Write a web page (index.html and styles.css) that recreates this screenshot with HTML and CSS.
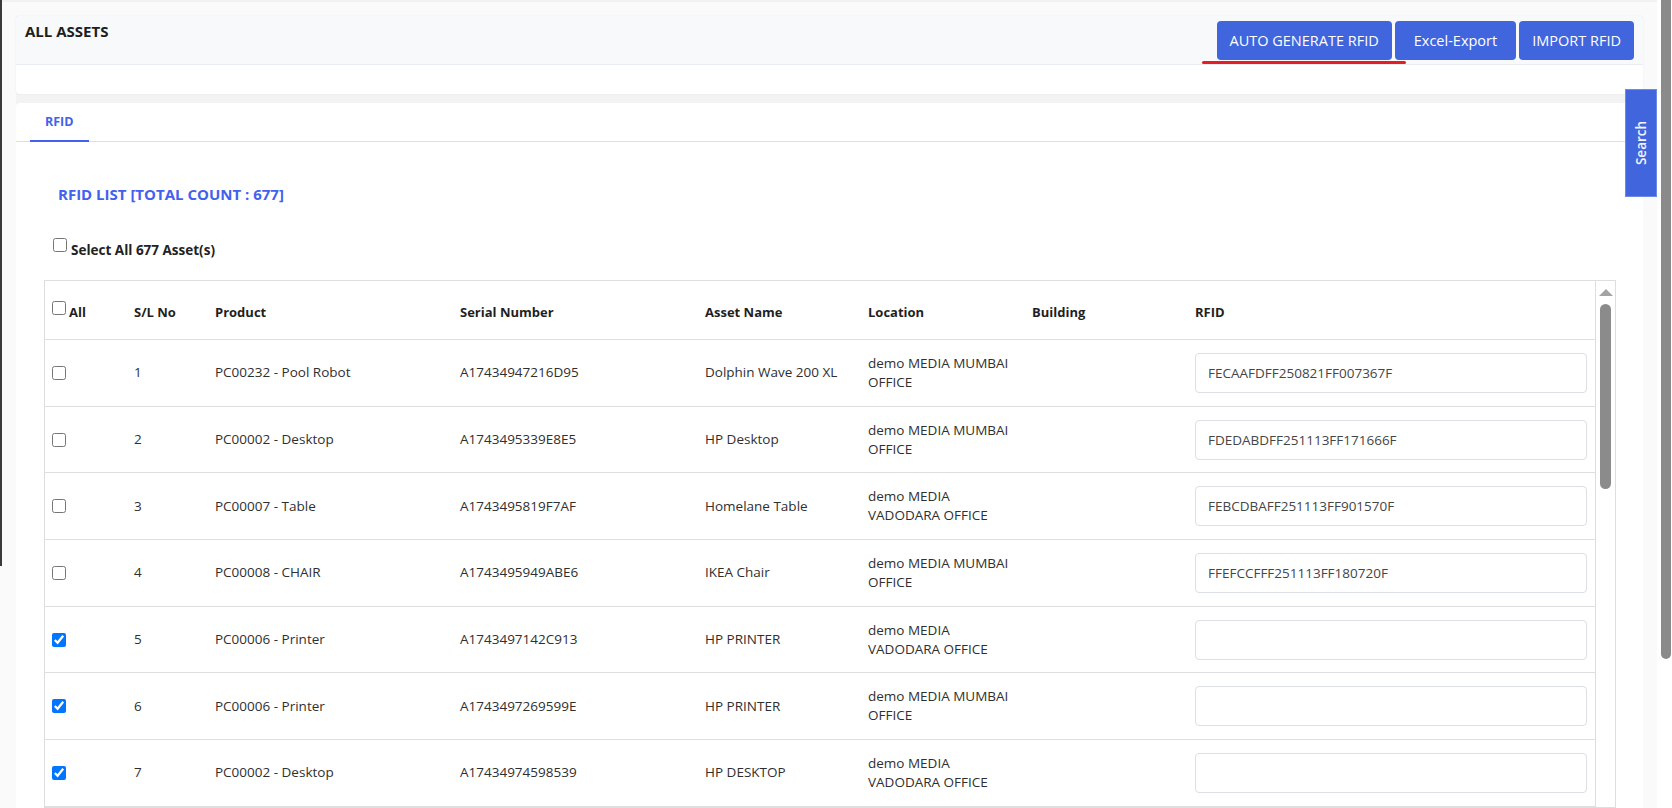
FILE: index.html
```html
<!DOCTYPE html>
<html lang="en">
<head>
  <meta charset="UTF-8">
  <meta name="viewport" content="width=device-width, initial-scale=1.0">
  <title>All Assets - RFID</title>
  <link rel="stylesheet" href="styles.css">
</head>
<body>
  <div class="page">
    <div class="content">
      <div class="main">

        <div class="page-head">
          <div class="head-bar">
            <h1>ALL ASSETS</h1>
            <div class="actions">
              <button class="btn">AUTO GENERATE RFID</button>
              <button class="btn btn-export">Excel-Export</button>
              <button class="btn">IMPORT RFID</button>
            </div>
          </div>
          <div class="head-foot"></div>
        </div>

        <div class="panel">
          <div class="tabs">
            <a class="tab active">RFID</a>
          </div>

          <div class="panel-body">
            <h2 class="list-title">RFID LIST [TOTAL COUNT : 677]</h2>
            <label class="select-all"><input type="checkbox">Select All 677 Asset(s)</label>

            <div class="table-box">
              <div class="table-scroll">
                <table class="rfid-table">
                  <colgroup>
                    <col class="c-check">
                    <col class="c-sl">
                    <col class="c-product">
                    <col class="c-serial">
                    <col class="c-asset">
                    <col class="c-location">
                    <col class="c-building">
                    <col class="c-rfid">
                  </colgroup>
                  <thead>
                    <tr>
                      <th class="check-cell"><label class="all-check"><input type="checkbox">All</label></th>
                      <th>S/L No</th>
                      <th>Product</th>
                      <th>Serial Number</th>
                      <th>Asset Name</th>
                      <th>Location</th>
                      <th>Building</th>
                      <th>RFID</th>
                    </tr>
                  </thead>
                  <tbody>
                    <tr>
                      <td class="check-cell"><input type="checkbox"></td>
                      <td>1</td>
                      <td>PC00232 - Pool Robot</td>
                      <td>A17434947216D95</td>
                      <td>Dolphin Wave 200 XL</td>
                      <td>demo MEDIA MUMBAI<br>OFFICE</td>
                      <td></td>
                      <td><input class="rfid-input" type="text" value="FECAAFDFF250821FF007367F"></td>
                    </tr>
                    <tr>
                      <td class="check-cell"><input type="checkbox"></td>
                      <td>2</td>
                      <td>PC00002 - Desktop</td>
                      <td>A1743495339E8E5</td>
                      <td>HP Desktop</td>
                      <td>demo MEDIA MUMBAI<br>OFFICE</td>
                      <td></td>
                      <td><input class="rfid-input" type="text" value="FDEDABDFF251113FF171666F"></td>
                    </tr>
                    <tr>
                      <td class="check-cell"><input type="checkbox"></td>
                      <td>3</td>
                      <td>PC00007 - Table</td>
                      <td>A1743495819F7AF</td>
                      <td>Homelane Table</td>
                      <td>demo MEDIA<br>VADODARA OFFICE</td>
                      <td></td>
                      <td><input class="rfid-input" type="text" value="FEBCDBAFF251113FF901570F"></td>
                    </tr>
                    <tr>
                      <td class="check-cell"><input type="checkbox"></td>
                      <td>4</td>
                      <td>PC00008 - CHAIR</td>
                      <td>A1743495949ABE6</td>
                      <td>IKEA Chair</td>
                      <td>demo MEDIA MUMBAI<br>OFFICE</td>
                      <td></td>
                      <td><input class="rfid-input" type="text" value="FFEFCCFFF251113FF180720F"></td>
                    </tr>
                    <tr>
                      <td class="check-cell"><input type="checkbox" checked></td>
                      <td>5</td>
                      <td>PC00006 - Printer</td>
                      <td>A1743497142C913</td>
                      <td>HP PRINTER</td>
                      <td>demo MEDIA<br>VADODARA OFFICE</td>
                      <td></td>
                      <td><input class="rfid-input" type="text" value=""></td>
                    </tr>
                    <tr>
                      <td class="check-cell"><input type="checkbox" checked></td>
                      <td>6</td>
                      <td>PC00006 - Printer</td>
                      <td>A1743497269599E</td>
                      <td>HP PRINTER</td>
                      <td>demo MEDIA MUMBAI<br>OFFICE</td>
                      <td></td>
                      <td><input class="rfid-input" type="text" value=""></td>
                    </tr>
                    <tr>
                      <td class="check-cell"><input type="checkbox" checked></td>
                      <td>7</td>
                      <td>PC00002 - Desktop</td>
                      <td>A17434974598539</td>
                      <td>HP DESKTOP</td>
                      <td>demo MEDIA<br>VADODARA OFFICE</td>
                      <td></td>
                      <td><input class="rfid-input" type="text" value=""></td>
                    </tr>
                  </tbody>
                </table>
              </div>
              <div class="vscroll">
                <span class="arrow-up"></span>
                <span class="thumb"></span>
              </div>
            </div>
          </div>
        </div>

      </div>
    </div>
    <div class="page-scroll"><div class="page-thumb"></div></div>
  </div>

  <!-- overlays -->
  <div class="edge"></div>
  <div class="search-tab"><span>Search</span></div>
  <div class="mark"></div>
</body>
</html>
```

FILE: styles.css
```css
html, body {
  height: 100%;
  overflow: hidden;
}

body {
  margin: 0;
  font-family: "Open Sans", "Liberation Sans", sans-serif;
  color: #333;
  background: #fff;
}

.page {
  display: flex;
  height: 808px;
}

.content {
  flex: 1;
  background: #fafafa;
  border-top: 2px solid #f1f1f1;
  padding: 14px 14px 0 16px;
  overflow: hidden;
}

.main {
  background: #f3f3f4;
  min-height: 100%;
}

/* header card */
.page-head {
  background: #fff;
  border-radius: 4px;
  box-shadow: 0 0 3px rgba(0, 0, 0, 0.05);
}

.head-bar {
  display: flex;
  justify-content: space-between;
  align-items: flex-start;
  background: #f8f9fa;
  border-bottom: 1px solid #e9edf3;
  border-radius: 4px 4px 0 0;
  padding: 5px 9px 4px;
}

.head-bar h1 {
  margin: 0;
  font-size: 15px;
  font-weight: 700;
  line-height: normal;
  color: #1e1e1e;
}

.actions {
  display: flex;
  gap: 3px;
}

.btn {
  height: 39px;
  padding: 0 13px;
  border: none;
  border-radius: 4px;
  background: #4065dd;
  color: #fff;
  font-family: inherit;
  font-size: 14.5px;
  cursor: pointer;
}

.btn-export {
  padding: 0 19px;
}

.head-foot {
  height: 29px;
}

/* list panel */
.panel {
  margin-top: 9px;
  background: #fff;
  border-radius: 4px 4px 0 0;
  min-height: 720px;
}

.tabs {
  display: flex;
  padding-left: 14px;
  border-bottom: 1px solid #dcdfe3;
}

.tab {
  padding: 9px 15px 8px;
  margin-bottom: -1px;
  font-size: 12.5px;
  font-weight: 700;
  line-height: 20px;
  color: #4361ee;
  border-bottom: 2px solid #4361ee;
}

.panel-body {
  padding: 42px 27px 0 28px;
}

.list-title {
  margin: 0 0 0 14px;
  font-size: 15px;
  font-weight: 700;
  line-height: 20px;
  color: #4361ee;
}

.select-all {
  display: block;
  margin: 34px 0 0 9px;
  font-size: 13.5px;
  font-weight: 700;
  line-height: 20px;
  color: #222;
}

input[type="checkbox"] {
  width: 14px;
  height: 14px;
  margin: 0 4px 0 0;
  vertical-align: 3px;
}

/* table */
.table-box {
  display: flex;
  margin-top: 20px;
  border: 1px solid #dedede;
}

.table-scroll {
  flex: 1;
  border-right: 1px solid #dedede;
}

.rfid-table {
  width: 1550px;
  table-layout: fixed;
  border-collapse: separate;
  border-spacing: 0;
}

.c-check { width: 81px; }
.c-sl { width: 81px; }
.c-product { width: 245px; }
.c-serial { width: 245px; }
.c-asset { width: 163px; }
.c-location { width: 164px; }
.c-building { width: 163px; }
.c-rfid { width: 408px; }

.rfid-table th {
  text-align: left;
  padding: 20px 8px 17px;
  font-size: 13px;
  font-weight: 700;
  line-height: 20px;
  color: #1f1f1f;
  border-bottom: 1px solid #dedede;
}

.rfid-table td {
  box-sizing: border-box;
  height: 66.7px;
  padding: 0 8px;
  font-size: 13.5px;
  line-height: 19px;
  color: #2f2f2f;
  vertical-align: middle;
  border-bottom: 1px solid #dedede;
  white-space: nowrap;
}

.rfid-table .check-cell {
  padding-left: 7px;
}

.rfid-table td.check-cell input {
  display: block;
  margin: 0;
}

.all-check input {
  margin: 0 3px 0 0;
  vertical-align: 2px;
}

.rfid-input {
  box-sizing: border-box;
  width: 100%;
  height: 40px;
  padding: 0 12px;
  border: 1px solid #dcdfe3;
  border-radius: 4px;
  font-family: inherit;
  font-size: 13.5px;
  color: #454545;
  background: #fff;
}

.vscroll {
  width: 19px;
  display: flex;
  flex-direction: column;
  align-items: center;
  padding-top: 8px;
}

.arrow-up {
  width: 0;
  height: 0;
  border-left: 7px solid transparent;
  border-right: 7px solid transparent;
  border-bottom: 7px solid #a3a3a3;
}

.thumb {
  width: 11px;
  height: 185px;
  margin-top: 8px;
  border-radius: 6px;
  background: #8b8b8b;
}

/* page scrollbar */
.page-scroll {
  width: 15px;
  background: #fff;
}

.page-thumb {
  width: 10px;
  height: 659px;
  margin-left: 4px;
  background: #8a8a8a;
  border-radius: 0 0 5px 5px;
}

/* overlays */
.edge {
  position: absolute;
  left: 0;
  top: 0;
  width: 2px;
  height: 566px;
  background: #3a3a3a;
}

.search-tab {
  position: absolute;
  top: 89px;
  left: 1625px;
  width: 32px;
  height: 108px;
  box-sizing: border-box;
  border: 1px solid #6d8ae6;
  background: #4065dd;
  display: flex;
  align-items: center;
  justify-content: center;
}

.search-tab span {
  transform: rotate(-90deg);
  font-size: 13.5px;
  font-weight: 600;
  color: #f2f4ff;
  white-space: nowrap;
}

.mark {
  position: absolute;
  left: 1202px;
  top: 61px;
  width: 204px;
  height: 3px;
  border-radius: 2px;
  background: #e31e24;
}
```
